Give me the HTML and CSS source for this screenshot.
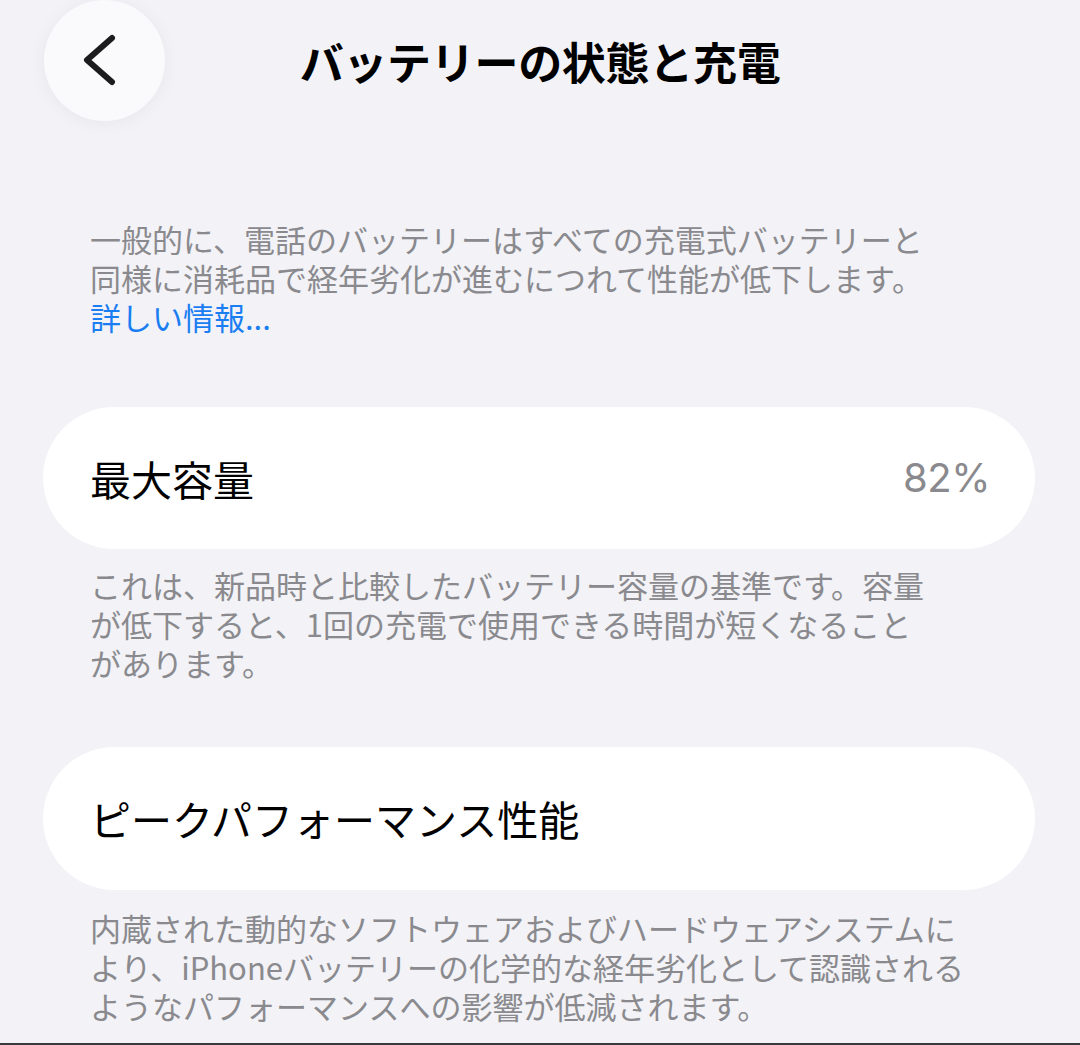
FILE: index.html
```html
<!DOCTYPE html>
<html lang="ja">
<head>
<meta charset="utf-8">
<link rel="stylesheet" href="styles.css">
</head>
<body>
<div class="page">
  <header class="navbar">
    <div class="nav-left">
      <button class="back" aria-label="戻る">
        <svg width="121" height="121" viewBox="0 0 121 121">
          <polyline points="68,38 43,60 68,82" fill="none" stroke="#1c1c1e" stroke-width="6" stroke-linecap="round" stroke-linejoin="round"/>
        </svg>
      </button>
    </div>
    <h1 class="title">バッテリーの状態と充電</h1>
    <div class="nav-right"></div>
  </header>

  <p class="note intro"><span class="line">一般的に、電話のバッテリーはすべての充電式バッテリーと</span><span class="line">同様に消耗品で経年劣化が進むにつれて性能が低下します。</span><span class="line"><a class="link" href="#">詳しい情報...</a></span></p>

  <div class="card">
    <span class="label">最大容量</span>
    <span class="value">82%</span>
  </div>
  <p class="note note-tight"><span class="line">これは、新品時と比較したバッテリー容量の基準です。容量</span><span class="line">が低下すると、1回の充電で使用できる時間が短くなること</span><span class="line">があります。</span></p>

  <div class="card card-second">
    <span class="label">ピークパフォーマンス性能</span>
  </div>
  <p class="note"><span class="line">内蔵された動的なソフトウェアおよびハードウェアシステムに</span><span class="line">より、iPhoneバッテリーの化学的な経年劣化として認識される</span><span class="line">ようなパフォーマンスへの影響が低減されます。</span></p>
</div>
<div class="bottom-edge"></div>
</body>
</html>
```
FILE: styles.css
```css
html, body {
  margin: 0;
  padding: 0;
  background: #f2f2f7;
}
body {
  font-family: "Noto Sans CJK JP", "Noto Sans", sans-serif;
  width: 1080px;
  height: 1045px;
  overflow: hidden;
  position: relative;
}
.page {
  display: flex;
  flex-direction: column;
}
.navbar {
  display: grid;
  grid-template-columns: 1fr auto 1fr;
  align-items: center;
  height: 121px;
}
.nav-left {
  padding-left: 44px;
  display: flex;
}
.back {
  width: 121px;
  height: 121px;
  border-radius: 50%;
  border: none;
  padding: 0;
  background: #fafafc;
  box-shadow: 0 2px 18px rgba(0, 0, 0, 0.05);
  display: block;
}
.back svg {
  display: block;
}
.title {
  margin: 0;
  font-size: 44px;
  font-weight: 700;
  color: #000;
  line-height: 1;
  letter-spacing: -0.3px;
}
.note {
  margin: 18px 0 0;
  padding: 0 40px 0 90px;
  font-size: 31px;
  color: #8a8a8e;
  white-space: nowrap;
}
.note .line {
  display: block;
  height: 39px;
  line-height: 39px;
}
.note.intro {
  margin-top: 98px;
}
.note.note-tight {
  margin-top: 16px;
}
.link {
  color: #1a7ef2;
  text-decoration: none;
}
.card {
  margin: 71px 45px 0 43px;
  height: 142px;
  border-radius: 72px;
  background: #ffffff;
  display: flex;
  align-items: center;
  justify-content: space-between;
  padding: 0 45px 0 47px;
}
.card-second {
  margin-top: 65px;
  height: 143px;
}
.label {
  font-size: 41px;
  color: #000;
  line-height: 1;
}
.value {
  font-family: "Inter", "Liberation Sans", sans-serif;
  font-size: 40px;
  color: #8a8a8e;
  line-height: 1;
  letter-spacing: -0.5px;
}
.bottom-edge {
  position: absolute;
  left: 0;
  right: 0;
  bottom: 0;
  height: 2px;
  background: #3a3a3c;
}
```
